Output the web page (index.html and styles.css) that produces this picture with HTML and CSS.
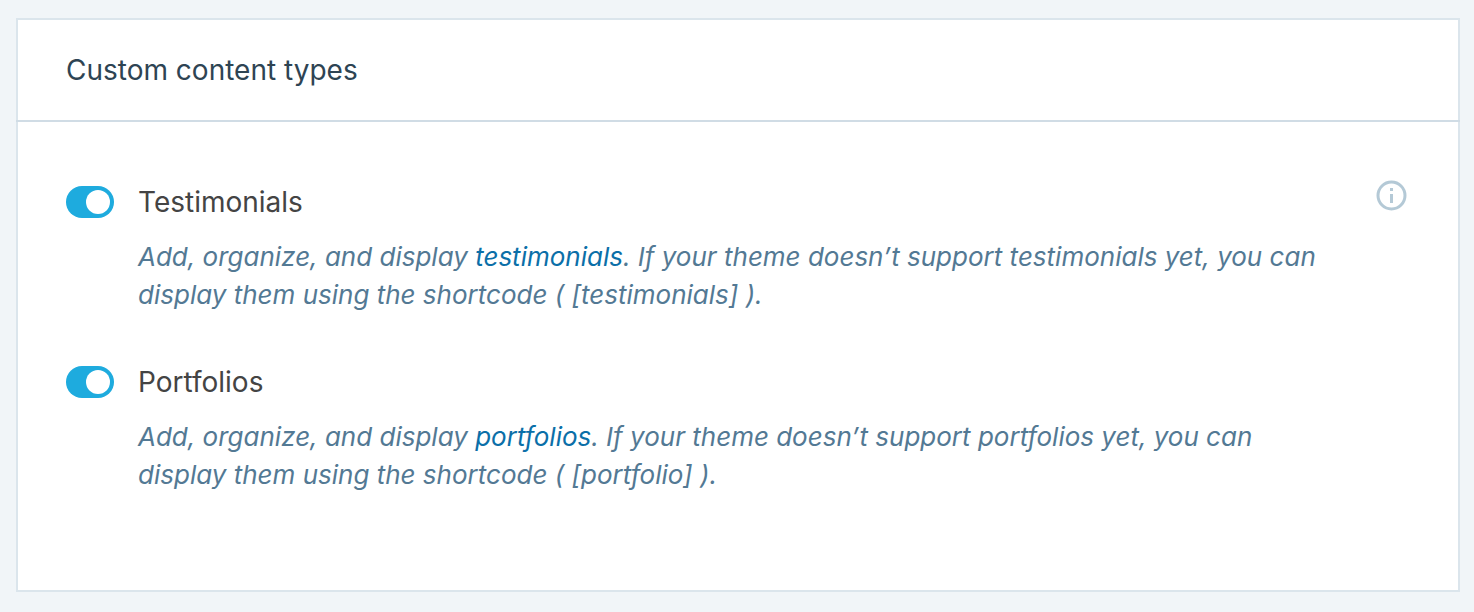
FILE: index.html
```html
<!DOCTYPE html>
<html lang="en">
<head>
<meta charset="utf-8">
<title>Custom content types</title>
<link rel="stylesheet" href="styles.css">
</head>
<body>
<section class="card">
  <header class="card-header"><h2 class="card-title">Custom content types</h2></header>
  <div class="card-body">
    <div class="settings">
      <div class="setting">
        <input class="toggle" type="checkbox" role="switch" id="testimonials" checked>
        <div class="setting-text">
          <label class="setting-label" for="testimonials">Testimonials</label>
          <p class="setting-description">Add, organize, and display <a class="link" href="#testimonials">testimonials</a>. If your theme doesn’t support testimonials yet, you can display them using the shortcode ( [testimonials] ).</p>
        </div>
      </div>
      <div class="setting">
        <input class="toggle" type="checkbox" role="switch" id="portfolios" checked>
        <div class="setting-text">
          <label class="setting-label" for="portfolios">Portfolios</label>
          <p class="setting-description">Add, organize, and display <a class="link" href="#portfolios">portfolios</a>. If your theme doesn’t support portfolios yet, you can display them using the shortcode ( [portfolio] ).</p>
        </div>
      </div>
    </div>
    <button class="info" type="button" aria-label="More information">
      <svg class="info-icon" viewBox="0 0 36 36" aria-hidden="true"><circle cx="17.5" cy="17.5" r="13.5" fill="none" stroke="currentColor" stroke-width="3"/><path d="M16 10h3v3h-3zM16 16h3v9h-3z" fill="currentColor"/></svg>
    </button>
  </div>
</section>
</body>
</html>
```
FILE: styles.css
```css
* {
  box-sizing: border-box;
}

body {
  margin: 0;
  padding: 18px 14px 20px 16px;
  background: #f1f5f8;
  color: #3d4145;
  font-family: Inter, "Noto Sans", sans-serif;
  font-variant-ligatures: none;
}

.card {
  background: #fff;
  border: 2px solid #dbe5ec;
}

.card-header {
  margin: 0 -2px;
  padding: 30px 50px;
  border-bottom: 2px solid #d0dce5;
}

.card-title {
  margin: 0;
  color: #2e4453;
  font-size: 28px;
  font-weight: 400;
  line-height: 40px;
}

.card-body {
  display: flex;
  align-items: flex-start;
  gap: 48px;
  padding: 56px 48px 96px;
}

.settings {
  display: grid;
  flex: 1;
  gap: 44px;
}

.setting {
  display: flex;
  align-items: flex-start;
  gap: 24px;
}

.toggle {
  display: flex;
  flex: none;
  align-items: center;
  justify-content: flex-end;
  width: 48px;
  height: 32px;
  margin: 8px 0 0;
  padding: 4px;
  border-radius: 16px;
  background: #1eabde;
  appearance: none;
  cursor: pointer;
}

.toggle::before {
  width: 24px;
  height: 24px;
  border-radius: 50%;
  background: #fff;
  content: "";
}

.toggle:not(:checked) {
  justify-content: flex-start;
  background: #a8bece;
}

.setting-text {
  flex: 1;
}

.setting-label {
  display: block;
  color: #444;
  font-size: 28px;
  line-height: 48px;
}

.setting-description {
  margin: 12px 0 0;
  color: #537994;
  font-size: 26px;
  font-style: oblique 10deg;
  font-weight: 450;
  line-height: 38px;
}

.link {
  color: #0b6fa8;
  text-decoration: none;
}

.info {
  flex: none;
  width: 36px;
  height: 36px;
  padding: 0;
  border: 0;
  background: none;
  color: #b4c9d6;
  cursor: pointer;
}

.info-icon {
  display: block;
  width: 36px;
  height: 36px;
}
```
